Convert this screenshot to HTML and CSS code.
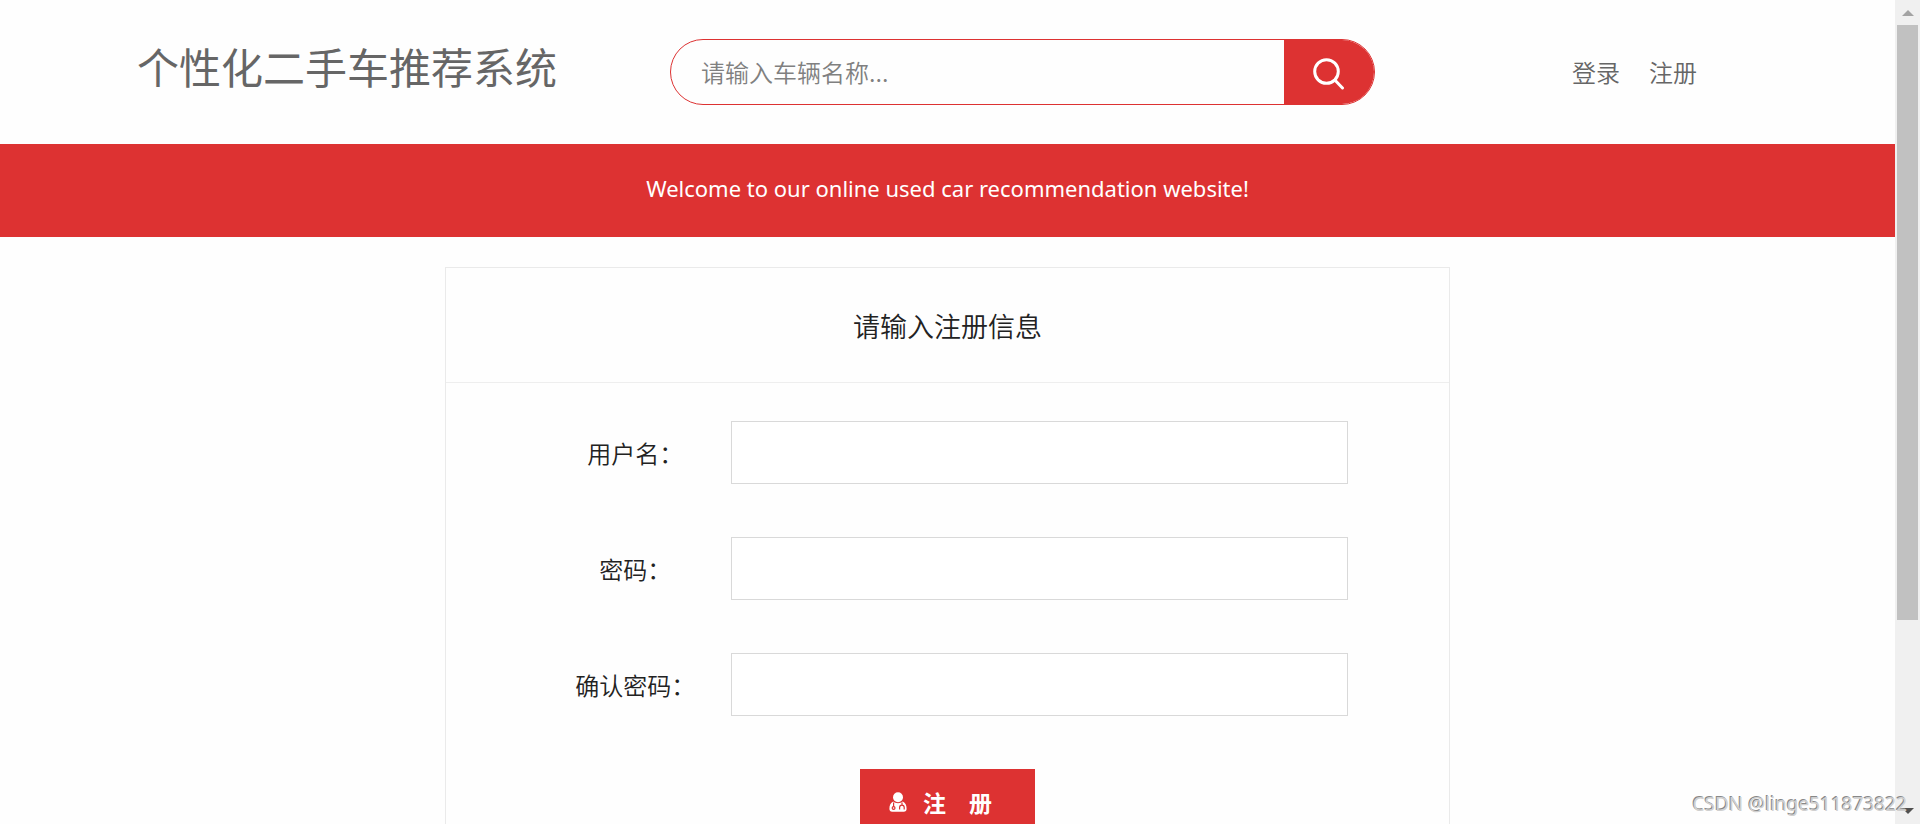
FILE: index.html
```html
<!DOCTYPE html>
<html lang="zh-CN">
<head>
<meta charset="utf-8">
<title>个性化二手车推荐系统</title>
<link rel="stylesheet" href="styles.css">
</head>
<body>
<div class="page">
  <header class="header">
    <h1 class="logo">个性化二手车推荐系统</h1>
    <form class="search" role="search">
      <input class="search-input" type="text" aria-label="车辆名称" placeholder="请输入车辆名称...">
      <button class="search-button" type="button" aria-label="搜索">
        <svg class="search-icon" viewBox="0 0 32 32" aria-hidden="true"><circle cx="13.5" cy="13.5" r="11.8"/><path d="M21.8 22 29.5 30"/></svg>
      </button>
    </form>
    <nav class="nav"><a href="#login">登录</a><a href="#register">注册</a></nav>
  </header>
  <p class="banner">Welcome to our online used car recommendation website!</p>
  <main class="card">
    <h2 class="card-title">请输入注册信息</h2>
    <form class="form">
      <div class="row"><label for="username">用户名：</label><input id="username" type="text"></div>
      <div class="row"><label for="password">密码：</label><input id="password" type="password"></div>
      <div class="row"><label for="confirm">确认密码：</label><input id="confirm" type="password"></div>
      <button class="submit" type="button">
        <svg class="user-icon" viewBox="0 0 18 20" aria-hidden="true">
          <circle cx="9" cy="5.2" r="5"/>
          <path d="M4.2 9.6C1.600 10.800.4 13.500.4 16.700c0 2 1 3 2.800 3h11.600c1.800 0 2.800-1 2.800-3 0-3.200-1.200-5.900-3.800-7.100-2.600 2.200-7 2.200-9.600 0z"/>
          <path class="tube" d="M4.600 10.500v4.300M13 10.500v2.500M10.600 17.500v-2.100a2.300 2.300 0 0 1 4.600 0v2.100"/>
          <circle class="tube" cx="4.600" cy="16" r="1.400"/>
        </svg>
        <span>注&emsp;册</span>
      </button>
    </form>
  </main>
</div>
<div class="scrollbar" aria-hidden="true">
  <svg class="arrow arrow-up" viewBox="0 0 12 6"><path d="M0 6 6 0l6 6z"/></svg>
  <div class="thumb"></div>
  <svg class="arrow" viewBox="0 0 12 6"><path d="M0 0h12L6 6z"/></svg>
</div>
<div class="watermark">CSDN @linge511873822</div>
</body>
</html>
```
FILE: styles.css
```css
* { box-sizing: border-box; }

body {
  display: flex;
  height: 100vh;
  margin: 0;
  overflow: hidden;
  position: relative;
  background: #fefefe;
  color: #222;
  font-family: "Noto Sans", "Noto Sans CJK SC", sans-serif;
  font-size: 24px;
}

h1, h2, p { margin: 0; font-weight: 400; }
input, button { font: inherit; }

.page { flex: 1; min-width: 0; overflow: hidden; }

.header {
  display: flex;
  align-items: center;
  height: 144px;
  padding: 0 198px 0 137px;
  color: #666;
  font-family: "Noto Sans CJK SC", sans-serif;
}

.logo {
  padding-bottom: 12px;
  font-size: 42px;
  line-height: 56px;
  white-space: nowrap;
}

.search {
  display: flex;
  flex: 0 1 705px;
  min-width: 0;
  height: 66px;
  margin-left: 113px;
  border: 1px solid #dd3232;
  border-radius: 33px;
  overflow: hidden;
}

.search-input {
  flex: 1;
  min-width: 0;
  padding: 0 30px 2px;
  border: 0;
  outline: 0;
  background: transparent;
  font-weight: 350;
}

.search-input::placeholder { color: #808080; }

.search-button {
  display: grid;
  place-items: center;
  width: 90px;
  padding: 3px 0 0;
  border: 0;
  background: #dd3232;
}

.search-icon {
  width: 32px;
  height: 32px;
  fill: none;
  stroke: #fff;
  stroke-width: 3;
  stroke-linecap: round;
}

.nav {
  display: flex;
  gap: 29px;
  margin-left: auto;
  padding-bottom: 2px;
  font-weight: 350;
  white-space: nowrap;
}

.nav a { color: #666; text-decoration: none; }

.banner {
  padding: 26px 16px 31px;
  background: #dd3232;
  color: #fff;
  font-size: 22px;
  line-height: 36px;
  text-align: center;
}

.card {
  width: 53%;
  min-height: 640px;
  margin: 30px auto 0;
  border: 1px solid #eaeaea;
  font-family: "Noto Sans CJK SC", sans-serif;
}

.card-title {
  padding: 40px 0 38px;
  border-bottom: 1px solid #eee;
  font-size: 27px;
  font-weight: 350;
  line-height: 36px;
  text-align: center;
}

.form {
  display: flex;
  flex-direction: column;
  gap: 53px;
  padding: 38px 101px 40px;
}

.row {
  display: grid;
  grid-template-columns: 176px 1fr;
  align-items: center;
  column-gap: 8px;
}

.row label { text-align: center; white-space: nowrap; font-weight: 350; }

.row input {
  width: 100%;
  height: 63px;
  padding: 0 16px;
  border: 1px solid #d9d9d9;
  background: #fff;
}

.submit {
  display: flex;
  align-items: center;
  align-self: center;
  gap: 16px;
  height: 66px;
  padding: 0 43px 0 29px;
  border: 0;
  background: #dd3232;
  color: #fff;
  font-size: 23px;
  font-weight: 700;
}

.user-icon { width: 18px; height: 20px; fill: #fff; }
.tube { fill: none; stroke: #dd3232; stroke-width: 1.2; }

.scrollbar {
  display: flex;
  flex-direction: column;
  align-items: center;
  justify-content: space-between;
  width: 25px;
  padding: 10px 2px;
  background: #f0f0f0;
}

.thumb { width: 21px; flex: 0 0 74%; margin: 9px 0 auto; background: #c1c1c1; }
.arrow { width: 12px; height: 6px; fill: #505050; }
.arrow-up { fill: #a3a3a3; }

.watermark {
  position: absolute;
  right: 13px;
  bottom: 6px;
  color: #d0d0d0;
  font-size: 19px;
  line-height: 28px;
  text-shadow: -1px -1px 0 #888;
}
```
